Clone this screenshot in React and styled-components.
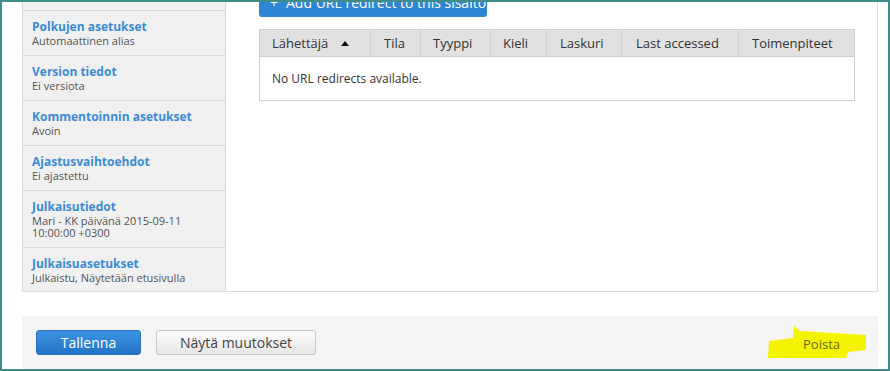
import React from 'react';
import styled, { createGlobalStyle } from 'styled-components';

const GlobalStyle = createGlobalStyle`
  html, body {
    margin: 0;
    padding: 0;
    background: #fff;
  }
  body {
    font-family: "Open Sans", "Liberation Sans", sans-serif;
    color: #333;
  }
`

// styles
const Frame = styled.div`
  box-sizing: border-box;
  width: 890px;
  height: 371px;
  border: 2px solid #3e8d89;
  overflow: hidden;
  padding: 0 10px 0 20px;
  display: flex;
  flex-direction: column;
`
const Panel = styled.div`
  margin-top: -36px;
  display: grid;
  grid-template-columns: 203px 1fr;
  border: 1px solid #dcdcdc;
  border-top: none;
`
const Sidebar = styled.div`
  background: #f0f0f0;
  border-right: 1px solid #dcdcdc;
`
const Item = styled.div`
  padding: 8px 10px 8px 9px;
  border-bottom: 1px solid #d9d9d9;
  &:last-child {
    border-bottom: none;
    padding-bottom: 7px;
  }
`
const ItemTitle = styled.div`
  font-size: 12px;
  line-height: 16px;
  font-weight: 700;
  color: #3b8bd8;
`
const ItemSub = styled.div`
  font-size: 11px;
  line-height: 12px;
  color: #555;
`
const Content = styled.div`
  padding: 21px 23px 0 33px;
`
const AddButton = styled.div`
  display: inline-flex;
  align-items: center;
  gap: 8px;
  height: 30px;
  padding: 0 11px;
  box-sizing: border-box;
  width: 228px;
  background: #2e86d6;
  border-radius: 3px;
  color: #fff;
  font-size: 14px;
  white-space: nowrap;
`
const Table = styled.table`
  margin-top: 12px;
  width: 595px;
  border-collapse: collapse;
  border: 1px solid #cfcfcf;
  table-layout: fixed;
`
const Th = styled.th`
  background: #e1e1e1;
  border: 1px solid #cfcfcf;
  height: 26px;
  padding: 0 0 0 ${p => p.$pad || 12}px;
  font-size: 13px;
  font-weight: 400;
  text-align: left;
  color: #333;
  white-space: nowrap;
`
const Td = styled.td`
  height: 43px;
  padding: 0 12px;
  font-size: 12px;
  color: #333;
`
const SortArrow = styled.span`
  display: inline-block;
  margin-left: 13px;
  width: 0;
  height: 0;
  border-left: 4px solid transparent;
  border-right: 4px solid transparent;
  border-bottom: 5px solid #111;
  vertical-align: 2px;
`
const Actions = styled.div`
  margin-top: 24px;
  flex: 1;
  background: #f5f5f5;
  display: flex;
  align-items: flex-start;
  gap: 15px;
  padding: 14px 38px 0 14px;
`
const Button = styled.div`
  box-sizing: border-box;
  height: 25px;
  width: ${p => p.$width}px;
  display: flex;
  align-items: center;
  justify-content: center;
  border-radius: 3px;
  font-size: 14px;
  background: ${p => p.$primary
    ? 'linear-gradient(#3c95e2, #2373c6)'
    : 'linear-gradient(#fdfdfd, #e6e6e6)'};
  border: 1px solid ${p => p.$primary ? '#2a72bd' : '#c9c9c9'};
  color: ${p => p.$primary ? '#fff' : '#444'};
`
const DeleteWrap = styled.div`
  position: relative;
  margin-left: auto;
  margin-top: 2px;
`
const Highlight = styled.svg`
  position: absolute;
  left: -35px;
  top: -6px;
  z-index: 0;
`
const DeleteLink = styled.span`
  position: relative;
  z-index: 1;
  font-size: 13px;
  color: #6e6818;
`

const items = [
  { title: 'URL-uudelleenohjaukset', sub: ['No redirects'] },
  { title: 'Polkujen asetukset', sub: ['Automaattinen alias'] },
  { title: 'Version tiedot', sub: ['Ei versiota'] },
  { title: 'Kommentoinnin asetukset', sub: ['Avoin'] },
  { title: 'Ajastusvaihtoehdot', sub: ['Ei ajastettu'] },
  { title: 'Julkaisutiedot', sub: ['Mari - KK päivänä 2015-09-11', '10:00:00 +0300'] },
  { title: 'Julkaisuasetukset', sub: ['Julkaistu, Näytetään etusivulla'] },
];

const columns = [
  { label: 'Lähettäjä', w: 111, sort: true },
  { label: 'Tila', w: 50, pad: 13 },
  { label: 'Tyyppi', w: 70, pad: 12 },
  { label: 'Kieli', w: 56, pad: 12 },
  { label: 'Laskuri', w: 75, pad: 13 },
  { label: 'Last accessed', w: 117, pad: 14 },
  { label: 'Toimenpiteet', w: 116, pad: 13 },
];

function App() {
  return (
    <Frame>
      <GlobalStyle />
      <Panel>
        <Sidebar>
          {items.map(item => (
            <Item key={item.title}>
              <ItemTitle>{item.title}</ItemTitle>
              {item.sub.map(s => <ItemSub key={s}>{s}</ItemSub>)}
            </Item>
          ))}
        </Sidebar>

        <Content>
          <AddButton><span>+</span> Add URL redirect to this sisältö</AddButton>
          <Table>
            <colgroup>
              {columns.map(c => <col key={c.label} style={{ width: c.w }} />)}
            </colgroup>
            <thead>
              <tr>
                {columns.map(c => (
                  <Th key={c.label} $pad={c.pad}>
                    {c.label}{c.sort && <SortArrow />}
                  </Th>
                ))}
              </tr>
            </thead>
            <tbody>
              <tr>
                <Td colSpan={7}>No URL redirects available.</Td>
              </tr>
            </tbody>
          </Table>
        </Content>
      </Panel>

      <Actions>
        <Button $primary $width={105}>Tallenna</Button>
        <Button $width={160}>Näytä muutokset</Button>
        <DeleteWrap>
          <Highlight width="100" height="34" viewBox="0 0 100 34">
            <polygon
              points="26,0 32,5 98,9 98,24 80,26 78,32 0,32 1,15 25,12"
              fill="#f4f400"
            />
          </Highlight>
          <DeleteLink>Poista</DeleteLink>
        </DeleteWrap>
      </Actions>
    </Frame>
  );
}

export default App;
